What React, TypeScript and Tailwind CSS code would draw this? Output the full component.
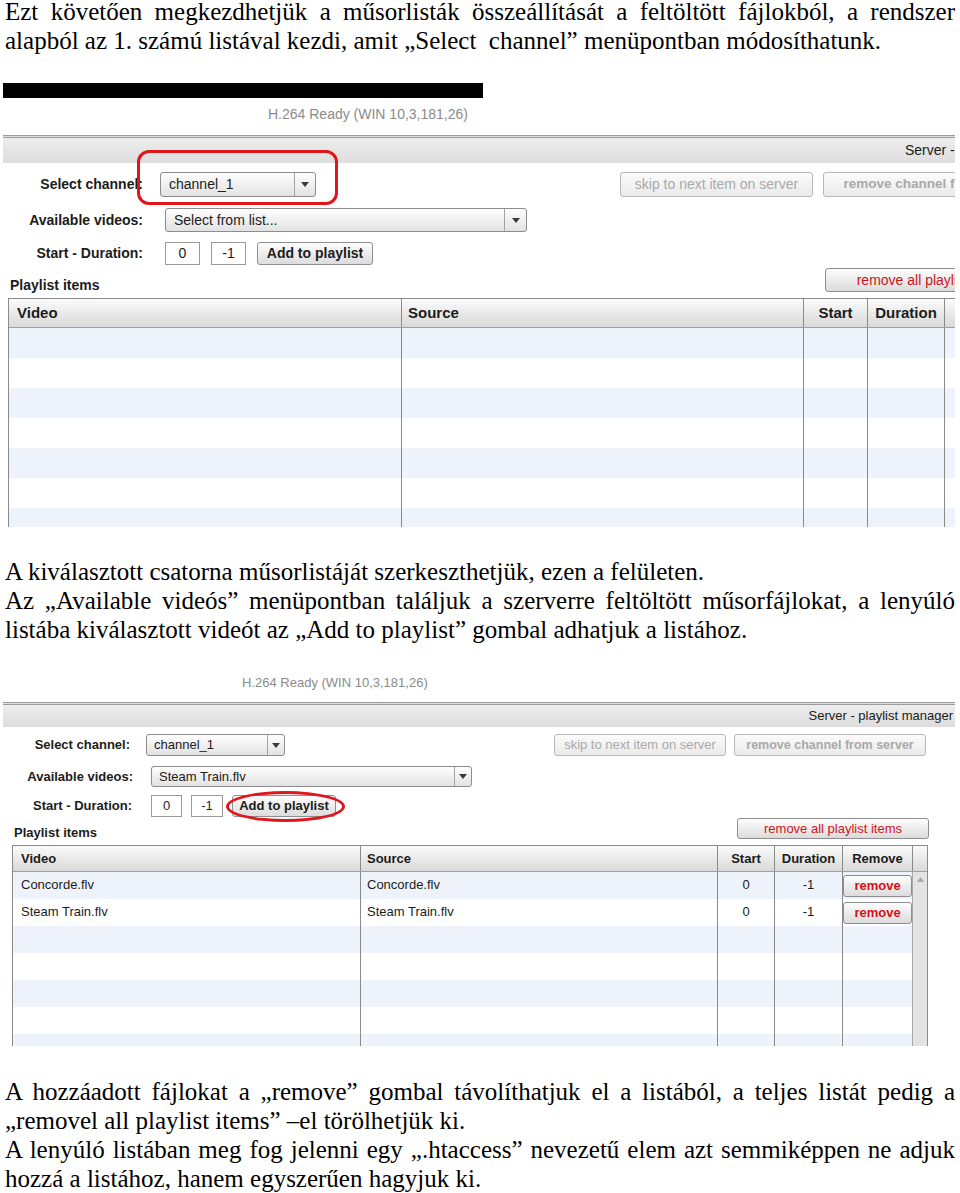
import React from "react";

// szövegsorok – a sorvégeket a képhez igazítva tördeljük
function Line({ children, justify }: { children: React.ReactNode; justify?: boolean }) {
  return (
    <div className={justify ? "text-justify [text-align-last:justify]" : "text-left"}>{children}</div>
  );
}

function Para({ children, className }: { children: React.ReactNode; className: string }) {
  return (
    <div
      className={`ml-[5px] w-[950px] font-['Liberation_Serif','Times_New_Roman',serif] text-[25px] leading-[29px] text-black ${className}`}
    >
      {children}
    </div>
  );
}

function Caret() {
  return (
    <svg width="8" height="5" viewBox="0 0 8 5">
      <path d="M0 0h8L4 5z" fill="#3a3a3a" />
    </svg>
  );
}

function Combo({ className, arrowClass, textClass, text }: { className: string; arrowClass: string; textClass: string; text: string }) {
  return (
    <div className={`flex shrink-0 rounded-[3px] border border-[#8d8d8d] bg-linear-to-b from-[#fefefe] to-[#e2e2e2] ${className}`}>
      <div className={`flex flex-1 items-center overflow-hidden whitespace-nowrap ${textClass}`}>{text}</div>
      <div className={`flex items-center justify-center border-l border-[#a3a3a3] ${arrowClass}`}>
        <Caret />
      </div>
    </div>
  );
}

function Field({ className, value }: { className: string; value: string }) {
  return (
    <div className={`flex shrink-0 items-center justify-center border border-[#9a9a9a] bg-white ${className}`}>{value}</div>
  );
}

const btn = "flex shrink-0 items-center justify-center whitespace-nowrap rounded-[3px] border border-[#8e8e8e] bg-linear-to-b from-[#fdfdfd] to-[#dcdcdc]";
const btnOff = "flex shrink-0 items-center justify-center whitespace-nowrap rounded-[3px] border border-[#b8b8b8] bg-linear-to-b from-[#fbfbfb] to-[#eaeaea] text-[#a9a9a9]";

const stripes = [0, 1, 2, 3, 4, 5, 6];

function ShotOne() {
  return (
    <div className="ml-[3px] mt-[28px] w-[952px] overflow-hidden font-['Liberation_Sans',Arial,sans-serif] text-[14px] text-[#1c1c1c]">
      <div className="h-[15px] w-[480px] bg-black" />
      <div className="h-[37px] whitespace-nowrap pl-[265px] pt-[8px] leading-[16px] text-[#8b8b8b]">H.264 Ready (WIN 10,3,181,26)</div>
      <div className="h-[28px] whitespace-nowrap border-t-[3px] border-double border-[#9c9c9c] bg-linear-to-b from-[#ededed] to-[#dddddd] pl-[902px] pt-[4px] leading-[16px]">
        Server - playlist manager
      </div>

      <div className="mt-[9px] flex h-[25px] items-center">
        <div className="w-[140px] shrink-0 text-right font-bold">Select channel:</div>
        <div className="relative ml-[17px] shrink-0">
          <Combo className="h-[25px] w-[156px]" arrowClass="w-[21px]" textClass="pl-[8px]" text="channel_1" />
          <div className="pointer-events-none absolute -left-[23px] -top-[22px] h-[55px] w-[201px] rounded-[12px] border-[3px] border-[#e1161b]" />
        </div>
        <div className={`${btnOff} ml-[304px] h-[25px] w-[193px] text-[14px]`}>skip to next item on server</div>
        <div className={`${btnOff} ml-[10px] h-[25px] w-[222px] text-[13.5px] font-bold`}>remove channel from server</div>
      </div>

      <div className="mt-[11px] flex h-[24px] items-center">
        <div className="w-[140px] shrink-0 text-right font-bold">Available videos:</div>
        <Combo className="ml-[22px] h-[24px] w-[362px]" arrowClass="w-[22px]" textClass="pl-[8px]" text="Select from list..." />
      </div>

      <div className="mt-[10px] flex h-[23px] items-center">
        <div className="w-[140px] shrink-0 text-right font-bold">Start - Duration:</div>
        <Field className="ml-[22px] h-[23px] w-[35px]" value="0" />
        <Field className="ml-[11px] h-[23px] w-[35px]" value="-1" />
        <div className={`${btn} ml-[11px] h-[23px] w-[116px] font-bold`}>Add to playlist</div>
      </div>

      <div className="flex h-[33px] items-start">
        <div className="mt-[12px] w-[822px] shrink-0 pl-[7px] font-bold leading-[16px]">Playlist items</div>
        <div className={`${btn} mt-[3px] h-[24px] w-[212px] text-[#d0131d]`}>remove all playlist items</div>
      </div>

      <div className="ml-[5px] h-[229px] w-[1000px] overflow-hidden border-l border-t border-[#8a8a8a] text-[15px]">
        <div className="flex h-[29px] border-b border-[#a0a0a0] bg-linear-to-b from-[#fbfbfb] to-[#d9d9d9] font-bold leading-[28px]">
          <div className="w-[392px] shrink-0 pl-[8px]">Video</div>
          <div className="w-[402px] shrink-0 border-l border-[#8a8a8a] pl-[6px]">Source</div>
          <div className="w-[64px] shrink-0 border-l border-[#8a8a8a] text-center">Start</div>
          <div className="w-[77px] shrink-0 border-l border-[#8a8a8a] text-center">Duration</div>
          <div className="w-[84px] shrink-0 border-l border-[#8a8a8a] text-center">Remove</div>
        </div>
        {stripes.map((i) => (
          <div key={i} className={`flex h-[30px] ${i % 2 === 0 ? "bg-[#eef3fb]" : "bg-white"}`}>
            <div className="w-[392px] shrink-0" />
            <div className="w-[402px] shrink-0 border-l border-[#8a8a8a]" />
            <div className="w-[64px] shrink-0 border-l border-[#8a8a8a]" />
            <div className="w-[77px] shrink-0 border-l border-[#8a8a8a]" />
            <div className="w-[84px] shrink-0 border-l border-[#8a8a8a]" />
          </div>
        ))}
      </div>
    </div>
  );
}

const items = [
  { video: "Concorde.flv", source: "Concorde.flv", start: "0", dur: "-1" },
  { video: "Steam Train.flv", source: "Steam Train.flv", start: "0", dur: "-1" },
];

function ShotTwo() {
  return (
    <div className="ml-[3px] mt-[26px] w-[952px] overflow-hidden font-['Liberation_Sans',Arial,sans-serif] text-[13px] text-[#1c1c1c]">
      <div className="h-[32px] whitespace-nowrap pl-[239px] pt-[5px] text-[13px] leading-[16px] text-[#8b8b8b]">H.264 Ready (WIN 10,3,181,26)</div>
      <div className="h-[25px] whitespace-nowrap border-t-[3px] border-double border-[#9c9c9c] bg-linear-to-b from-[#ededed] to-[#dddddd] pr-[2px] pt-[3px] text-right leading-[16px]">
        Server - playlist manager
      </div>

      <div className="mt-[7px] flex h-[22px] items-center">
        <div className="w-[127px] shrink-0 text-right font-bold">Select channel:</div>
        <Combo className="ml-[16px] h-[22px] w-[139px]" arrowClass="w-[17px]" textClass="pl-[7px]" text="channel_1" />
        <div className={`${btnOff} ml-[269px] h-[22px] w-[172px] text-[13px]`}>skip to next item on server</div>
        <div className={`${btnOff} ml-[8px] h-[22px] w-[192px] text-[12.5px] font-bold`}>remove channel from server</div>
      </div>

      <div className="mt-[10px] flex h-[21px] items-center">
        <div className="w-[130px] shrink-0 text-right font-bold">Available videos:</div>
        <Combo className="ml-[18px] h-[21px] w-[321px]" arrowClass="w-[17px]" textClass="pl-[7px]" text="Steam Train.flv" />
      </div>

      <div className="mt-[7px] flex h-[23px] items-center">
        <div className="w-[129px] shrink-0 text-right font-bold">Start - Duration:</div>
        <Field className="ml-[19px] h-[22px] w-[31px]" value="0" />
        <Field className="ml-[9px] h-[22px] w-[32px]" value="-1" />
        <div className="relative ml-[9px] shrink-0">
          <div className={`${btn} h-[22px] w-[104px] font-bold`}>Add to playlist</div>
          <div className="pointer-events-none absolute -left-[6px] -top-[4px] h-[31px] w-[119px] rounded-[50%] border-[3px] border-[#e1161b]" />
        </div>
      </div>

      <div className="flex h-[28px] items-start">
        <div className="mt-[8px] w-[734px] shrink-0 pl-[11px] font-bold leading-[15px]">Playlist items</div>
        <div className={`${btn} mt-[1px] h-[21px] w-[192px] text-[#d0131d]`}>remove all playlist items</div>
      </div>

      <div className="ml-[9px] flex h-[201px] w-[916px] flex-col overflow-hidden border-l border-r border-t border-[#8a8a8a]">
        <div className="flex h-[26px] shrink-0 border-b border-[#a0a0a0] bg-linear-to-b from-[#fbfbfb] to-[#d9d9d9] font-bold leading-[25px]">
          <div className="w-[347px] shrink-0 pl-[8px]">Video</div>
          <div className="w-[357px] shrink-0 border-l border-[#8a8a8a] pl-[6px]">Source</div>
          <div className="w-[57px] shrink-0 border-l border-[#8a8a8a] text-center">Start</div>
          <div className="w-[68px] shrink-0 border-l border-[#8a8a8a] text-center">Duration</div>
          <div className="w-[70px] shrink-0 border-l border-[#8a8a8a] text-center">Remove</div>
          <div className="flex-1 border-l border-[#8a8a8a]" />
        </div>
        <div className="flex flex-1">
          <div className="w-[899px] shrink-0">
            {stripes.map((i) => {
              const it = items[i];
              return (
                <div key={i} className={`flex h-[27px] ${i % 2 === 0 ? "bg-[#eef3fb]" : "bg-white"}`}>
                  <div className="w-[347px] shrink-0 pl-[8px] leading-[25px]">{it?.video}</div>
                  <div className="w-[357px] shrink-0 border-l border-[#8a8a8a] pl-[6px] leading-[25px]">{it?.source}</div>
                  <div className="w-[57px] shrink-0 border-l border-[#8a8a8a] text-center leading-[25px]">{it?.start}</div>
                  <div className="w-[68px] shrink-0 border-l border-[#8a8a8a] text-center leading-[25px]">{it?.dur}</div>
                  <div className="w-[70px] shrink-0 border-l border-[#8a8a8a] pt-[3px]">
                    {it && (
                      <div className={`${btn} h-[22px] w-[69px] font-bold text-[#d4101b]`}>remove</div>
                    )}
                  </div>
                </div>
              );
            })}
          </div>
          <div className="flex flex-1 justify-center border-l border-[#a8a8a8] bg-[#e3e3e3] pt-[5px]">
            <svg width="7" height="5" viewBox="0 0 7 5">
              <path d="M3.5 0L7 5H0z" fill="#a9a9a9" />
            </svg>
          </div>
        </div>
      </div>
    </div>
  );
}

export default function App() {
  return (
    <div className="h-[1193px] w-[960px] overflow-hidden bg-white">
      <Para className="-mt-[3px]">
        <Line justify>Ezt követően megkezdhetjük a műsorlisták összeállítását a feltöltött fájlokból, a rendszer</Line>
        <Line>alapból az 1. számú listával kezdi, amit „Select&nbsp; channel” menüpontban módosíthatunk.</Line>
      </Para>

      <ShotOne />

      <Para className="mt-[30px]">
        <Line>A kiválasztott csatorna műsorlistáját szerkeszthetjük, ezen a felületen.</Line>
        <Line justify>Az „Available videós” menüpontban találjuk a szerverre feltöltött műsorfájlokat, a lenyúló</Line>
        <Line>listába kiválasztott videót az „Add to playlist” gombal adhatjuk a listához.</Line>
      </Para>

      <ShotTwo />

      <Para className="mt-[31px]">
        <Line justify>A hozzáadott fájlokat a „remove” gombal távolíthatjuk el a listából, a teljes listát pedig a</Line>
        <Line>„removel all playlist items” –el törölhetjük ki.</Line>
        <Line justify>A lenyúló listában meg fog jelenni egy „.htaccess” nevezetű elem azt semmiképpen ne adjuk</Line>
        <Line>hozzá a listához, hanem egyszerűen hagyjuk ki.</Line>
      </Para>
    </div>
  );
}
